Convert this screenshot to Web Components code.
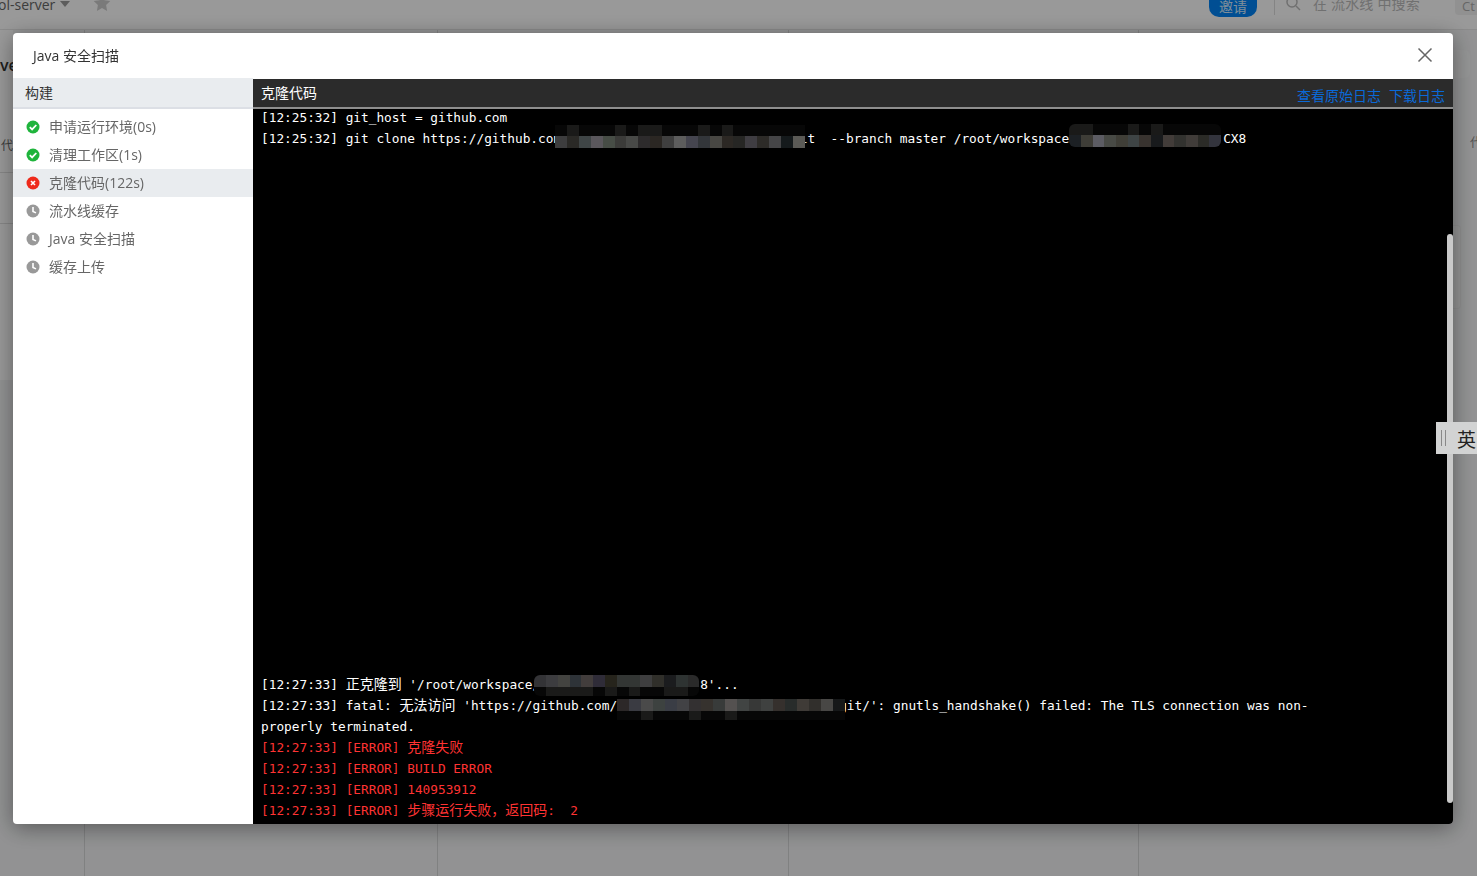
<!DOCTYPE html>
<html lang="zh-CN">
<head>
<meta charset="utf-8">
<title>Java 安全扫描</title>
<style>
  html, body { margin: 0; height: 100%; overflow: hidden; }
  body { font-family: "Open Sans", "Noto Sans CJK SC", sans-serif; background: #f3f4f5; }
</style>
</head>
<body>

<pipeline-page></pipeline-page>

<modal-layer>
  <build-dialog heading="Java 安全扫描">
    <step-list slot="side" heading="构建">
      <step-item state="ok">申请运行环境(0s)</step-item>
      <step-item state="ok">清理工作区(1s)</step-item>
      <step-item state="fail" active>克隆代码(122s)</step-item>
      <step-item state="wait">流水线缓存</step-item>
      <step-item state="wait">Java 安全扫描</step-item>
      <step-item state="wait">缓存上传</step-item>
    </step-list>
    <log-panel heading="克隆代码">
      <log-block first>
        <log-line>[12:25:32] git_host = github.com</log-line>
        <log-line>[12:25:32] git clone https://github.com<log-mosaic width="238.7" left="-6" top="-6" cellw="11.9" cells="#3d3d3e,#2a2926,#3f4546,#5a575c,#474d46,#3b3b39,#484947,#2d2b2c,#2b2723,#3f3f3f,#5d5d5d,#45454f,#33363a,#484743,#2c2824,#262624,#3f3d42,#2d2b28,#454547,#151a1c,#5b5a56" dark="1,5,7,8,12,14"></log-mosaic>it  --branch master /root/workspace<log-mosaic width="154" left="0" top="-7" round cellw="11.7" cells="#1c2024,#3e3d37,#5c5c63,#484a45,#3f3e37,#3e4445,#38332f,#181a1c,#423c39,#32322f,#403c39,#2b2b27,#33343d" dark="0,1,5,7"></log-mosaic>CX8</log-line>
      </log-block>
      <log-block>
        <log-line>[12:27:33] <log-cjk>正克隆到</log-cjk> '/root/workspace/<log-mosaic width="160" left="-6" top="-13" round below cellw="11.8" cells="#333336,#3c3c3f,#434340,#2e3338,#423d3c,#2f2c38,#26241c,#333634,#333634,#3e3e3f,#302f2a,#1b1c1e,#2e3332,#2a2a2a" dark="1,2,3,4,6,8,11,12"></log-mosaic>8'...</log-line>
        <log-line>[12:27:33] fatal: <log-cjk>无法访问</log-cjk> 'https://github.com/<log-mosaic width="222" left="0" top="-10" below cellw="12" cells="#2c2828,#3a3b42,#4a4a4a,#3d4240,#3a3d45,#424245,#333031,#36322e,#383b3a,#545150,#414443,#373837,#3f4140,#35302d,#282c2b,#3f3b37,#312f2c,#484745,#161819" dark="2,6,9"></log-mosaic>git/': gnutls_handshake() failed: The TLS connection was non-</log-line>
        <log-line>properly terminated.</log-line>
        <log-line error>[12:27:33] [ERROR] <log-cjk>克隆失败</log-cjk></log-line>
        <log-line error>[12:27:33] [ERROR] BUILD ERROR</log-line>
        <log-line error>[12:27:33] [ERROR] 140953912</log-line>
        <log-line error>[12:27:33] [ERROR] <log-cjk>步骤运行失败，返回码</log-cjk>:  2</log-line>
      </log-block>
    </log-panel>
  </build-dialog>
</modal-layer>

<ime-badge></ime-badge>

<script>
  const ICONS = {
    ok: `<circle cx="7" cy="7" r="6.5" fill="#1fb43c"/><path d="M3.8 7.2l2.3 2.2 4.2-4.4" fill="none" stroke="#fff" stroke-width="1.8"/>`,
    fail: `<circle cx="7" cy="7" r="6.5" fill="#ee2a1b"/><path d="M5 5l4 4M9 5l-4 4" fill="none" stroke="#fff" stroke-width="1.6"/>`,
    wait: `<circle cx="7" cy="7" r="6.5" fill="#999"/><path d="M7 3v4.4l3 1.5" fill="none" stroke="#fff" stroke-width="1.6"/>`
  };

  // BACKGROUND PAGE //
  class PipelinePage extends HTMLElement {
    constructor() {
      super();
      this.attachShadow({mode: 'open'}).innerHTML = `
        <style>
          :host { display: flex; flex-direction: column; height: 876px; color: #666; font-size: 14px; }
          .bar { display: flex; align-items: flex-start; height: 30px; background: #fff; border-bottom: 1px solid #e8e8e8; box-sizing: border-box; overflow: hidden; }
          .repo { margin: -5px 0 0 -2px; font-size: 14px; line-height: 20px; color: #666; }
          .caret { margin: 1px 0 0 5px; border: 5px solid transparent; border-top: 6px solid #999; border-bottom: 0; }
          .star { margin: -6px 0 0 23px; }
          .grow { flex: 1; }
          .invite { width: 48px; height: 17px; line-height: 14px; text-align: center; font-size: 14px; color: #d5ecff; background: #0083f5; border-radius: 0 0 10px 10px; }
          .sep { width: 1px; height: 15px; margin-left: 17px; background: #ddd; }
          .lens { margin: -3px 0 0 11px; }
          .find { margin: -6px 0 0 11px; line-height: 20px; font-size: 14px; letter-spacing: .2px; color: #bbb; }
          .key { width: 15px; height: 15px; margin-left: 35px; padding-left: 7px; line-height: 12px; font-size: 13px; color: #aaa; background: #f2f2f2; border-radius: 0 0 0 4px; overflow: hidden; }
          .main { flex: 1; display: flex; }
          .left { width: 13px; overflow: hidden; font-size: 12px; }
          .left .ve { height: 84px; box-sizing: border-box; padding: 24px 0 0 0; font-weight: 600; font-size: 16px; color: #333; background: #fff; }
          .left .a { height: 59px; box-sizing: border-box; padding: 22px 0 0 1px; border-bottom: 1px solid #e0e0e0; background: #fff; }
          .left .b { height: 51px; border-bottom: 1px solid #e0e0e0; background: #fff; box-sizing: border-box; }
          .left .c { height: 156px; background: #fff; }
          .board { flex: 1; display: flex; align-items: stretch; }
          .col { border-right: 1px solid #d6d7d8; }
          .col:nth-child(1) { width: 71px; }
          .col:nth-child(2) { width: 352px; }
          .col:nth-child(3) { width: 350px; }
          .col:nth-child(4) { width: 349px; }
          .col:last-child { flex: 1; border: 0; }
          .right { width: 24px; font-size: 12px; color: #888; }
          .card { height: 28px; width: 17px; margin-top: 20px; background: #f7f8f8; border-radius: 0 6px 6px 0; }
          .dai { margin: 56px 0 0 14px; line-height: 18px; overflow: hidden; height: 18px; }
          .tall { height: 82px; width: 7px; margin-top: 73px; background: #f5f6f6; border: 1px solid #eceded; border-left: 0; border-radius: 0 4px 4px 0; }
        </style>
        <div class="bar">
          <span class="repo">ol-server</span><span class="caret"></span>
          <svg class="star" width="18" height="18" viewBox="0 0 18 18"><path d="M9 1l2.5 5.3 5.8.8-4.2 4 1 5.8L9 14.1l-5.1 2.8 1-5.8-4.2-4 5.8-.8z" fill="#ccc"/></svg>
          <span class="grow"></span>
          <span class="invite">邀请</span><span class="sep"></span>
          <svg class="lens" width="16" height="14" viewBox="0 0 16 14"><circle cx="6" cy="5" r="5" fill="none" stroke="#bbb" stroke-width="1.5"/><path d="M10 9l4 4" stroke="#bbb" stroke-width="1.5"/></svg>
          <span class="find">在 流水线 中搜索</span>
          <span class="key">Ct</span>
        </div>
        <div class="main">
          <div class="left"><div class="ve">ve</div><div class="a">代</div><div class="b"></div><div class="c"></div></div>
          <div class="board"><div class="col"></div><div class="col"></div><div class="col"></div><div class="col"></div><div class="col"></div></div>
          <div class="right"><div class="card"></div><div class="dai">&nbsp;代</div><div class="tall"></div></div>
        </div>`;
    }
  }

  // DIM LAYER OVER THE PAGE //
  class ModalLayer extends HTMLElement {
    constructor() {
      super();
      this.attachShadow({mode: 'open'}).innerHTML = `
        <style>
          :host { position: fixed; inset: 0; display: flex; padding: 33px 24px 52px 13px; box-sizing: border-box; background: rgba(0,0,0,.4); }
        </style>
        <slot></slot>`;
    }
  }

  class BuildDialog extends HTMLElement {
    constructor() {
      super();
      this.attachShadow({mode: 'open'}).innerHTML = `
        <style>
          :host { flex: 1; display: flex; flex-direction: column; min-width: 0; background: #fff; border-radius: 4px; overflow: hidden; box-shadow: 0 4px 22px rgba(0,0,0,.4); }
          header { height: 46px; flex: none; display: flex; align-items: center; justify-content: space-between; padding: 0 20px 2px 20px; box-sizing: border-box; font-size: 14px; color: #333; }
          .body { flex: 1; display: flex; min-height: 0; }
          .side { width: 240px; flex: none; }
          svg { display: block; }
        </style>
        <header>
          <span class="title"></span>
          <svg width="16" height="16" viewBox="0 0 16 16"><path d="M1.5 1.5l13 13M14.5 1.5l-13 13" stroke="#666" stroke-width="1.5" fill="none"/></svg>
        </header>
        <div class="body">
          <div class="side"><slot name="side"></slot></div>
          <slot></slot>
        </div>`;
    }

    connectedCallback() {
      this.shadowRoot.querySelector('.title').textContent = this.getAttribute('heading');
    }
  }

  class StepList extends HTMLElement {
    constructor() {
      super();
      this.attachShadow({mode: 'open'}).innerHTML = `
        <style>
          :host { display: block; }
          .head { height: 31px; line-height: 29px; margin-top: -1px; padding-left: 12px; background: #e9ecef; border-bottom: 2px solid #dcdfe5; box-sizing: border-box; font-size: 14px; color: #333; }
          .items { padding-top: 4px; }
        </style>
        <div class="head"></div>
        <div class="items"><slot></slot></div>`;
    }

    connectedCallback() {
      this.shadowRoot.querySelector('.head').textContent = this.getAttribute('heading');
    }
  }

  class StepItem extends HTMLElement {
    constructor() {
      super();
      this.attachShadow({mode: 'open'}).innerHTML = `
        <style>
          :host { display: flex; align-items: center; height: 28px; padding: 0 0 2px 13px; box-sizing: border-box; font-size: 14px; color: #666; }
          :host([active]) { background: #e9ecef; }
          svg { flex: none; margin: 2px 9px 0 0; }
        </style>
        <svg width="14" height="14" viewBox="0 0 14 14"></svg><slot></slot>`;
    }

    connectedCallback() {
      this.shadowRoot.querySelector('svg').innerHTML = ICONS[this.getAttribute('state')];
    }
  }

  class LogPanel extends HTMLElement {
    constructor() {
      super();
      this.attachShadow({mode: 'open'}).innerHTML = `
        <style>
          :host { flex: 1; min-width: 0; display: flex; flex-direction: column; position: relative; background: #000; }
          .head { height: 30px; flex: none; display: flex; justify-content: space-between; padding: 0 8px; box-sizing: border-box; background: #2b2b2b; border-bottom: 2px solid #8e8e8e; font-size: 14px; color: #fff; line-height: 28px; }
          .links { display: flex; gap: 8px; padding-top: 3px; color: #0a69d8; }
          .scroll { flex: 1; min-height: 0; display: flex; flex-direction: column; justify-content: space-between; padding: 0 8px 3px; overflow: hidden; }
          .thumb { position: absolute; right: 0; top: 155px; bottom: 21px; width: 6px; background: #cacaca; border-radius: 3px; }
        </style>
        <div class="head"><span class="name"></span><span class="links"><span>查看原始日志</span><span>下载日志</span></span></div>
        <div class="scroll"><slot></slot></div>
        <div class="thumb"></div>`;
    }

    connectedCallback() {
      this.shadowRoot.querySelector('.name').textContent = this.getAttribute('heading');
    }
  }

  class LogBlock extends HTMLElement {
    constructor() {
      super();
      this.attachShadow({mode: 'open'}).innerHTML = `
        <style>
          :host { display: block; }
          :host([first]) { margin-top: -2px; }
        </style>
        <slot></slot>`;
    }
  }

  // white-space: pre is inherited, so these shadow roots carry no whitespace of their own
  class LogLine extends HTMLElement {
    constructor() {
      super();
      this.attachShadow({mode: 'open'}).innerHTML = `<style>
          :host { display: block; height: 21px; line-height: 21px; white-space: pre; color: #fff; font-family: "DejaVu Sans Mono", "Noto Sans CJK SC", monospace; font-size: 12.79px; }
          :host([error]) { color: #ff3333; }
        </style><slot></slot>`;
    }
  }

  class LogCjk extends HTMLElement {
    constructor() {
      super();
      this.attachShadow({mode: 'open'}).innerHTML = `<style>:host { font-family: "Noto Sans CJK SC", sans-serif; font-size: 14px; line-height: 1; }</style><slot></slot>`;
    }
  }

  // REDACTED PATCH IN THE LOG, KEEPS ITS PLACE IN THE LINE AND LIES OVER IT //
  class LogMosaic extends HTMLElement {
    constructor() {
      super();
      this.attachShadow({mode: 'open'}).innerHTML = `<style>
          :host { display: inline-block; position: relative; height: 1px; vertical-align: baseline; white-space: normal; }
          .patch { position: absolute; display: flex; flex-direction: column; overflow: hidden; }
          :host([round]) .patch { border-radius: 6px; }
          .strip { display: flex; flex: none; }
          .strip i { flex: none; height: 100%; }
        </style><div class="patch"></div>`;
    }

    connectedCallback() {
      const cellW = parseFloat(this.getAttribute('cellw'));
      const left = parseFloat(this.getAttribute('left'));
      const top = parseFloat(this.getAttribute('top'));
      const cells = this.getAttribute('cells').split(',');
      const dark = this.getAttribute('dark').split(',').map(Number);
      const below = this.hasAttribute('below');
      this.style.width = `${ this.getAttribute('width') }px`;

      const main = document.createElement('div');
      const shade = document.createElement('div');
      main.className = shade.className = 'strip';
      main.style.height = '12px';
      shade.style.height = below ? '9px' : '11px';

      cells.forEach((color, index) => {
        const cell = document.createElement('i');
        cell.style.cssText = `width:${ cellW }px;background:${ color };`;
        main.appendChild(cell);
        const over = document.createElement('i');
        over.style.cssText = `width:${ cellW }px;background:${ dark.includes(index) ? '#1a1a19' : '#070707' };`;
        shade.appendChild(over);
      });

      const patch = this.shadowRoot.querySelector('.patch');
      patch.style.left = `${ left }px`;
      patch.style.top = `${ below ? top : top - 11 }px`;
      patch.append(...(below ? [main, shade] : [shade, main]));
    }
  }

  // FLOATING INPUT METHOD TAB //
  class ImeBadge extends HTMLElement {
    constructor() {
      super();
      this.attachShadow({mode: 'open'}).innerHTML = `
        <style>
          :host { position: fixed; right: 0; top: 422px; width: 41px; height: 32px; display: flex; align-items: center; box-sizing: border-box; padding-left: 5px; background: #d2d3d3; font-family: "Noto Sans CJK SC", sans-serif; font-size: 19px; color: #222; white-space: nowrap; overflow: hidden; }
          .grip { flex: none; width: 3px; height: 16px; margin-right: 11px; border-left: 1px solid #888; border-right: 1px solid #888; }
        </style>
        <span class="grip"></span>英`;
    }
  }

  customElements.define('pipeline-page', PipelinePage);
  customElements.define('modal-layer', ModalLayer);
  customElements.define('build-dialog', BuildDialog);
  customElements.define('step-list', StepList);
  customElements.define('step-item', StepItem);
  customElements.define('log-panel', LogPanel);
  customElements.define('log-block', LogBlock);
  customElements.define('log-line', LogLine);
  customElements.define('log-cjk', LogCjk);
  customElements.define('log-mosaic', LogMosaic);
  customElements.define('ime-badge', ImeBadge);
</script>
</body>
</html>
